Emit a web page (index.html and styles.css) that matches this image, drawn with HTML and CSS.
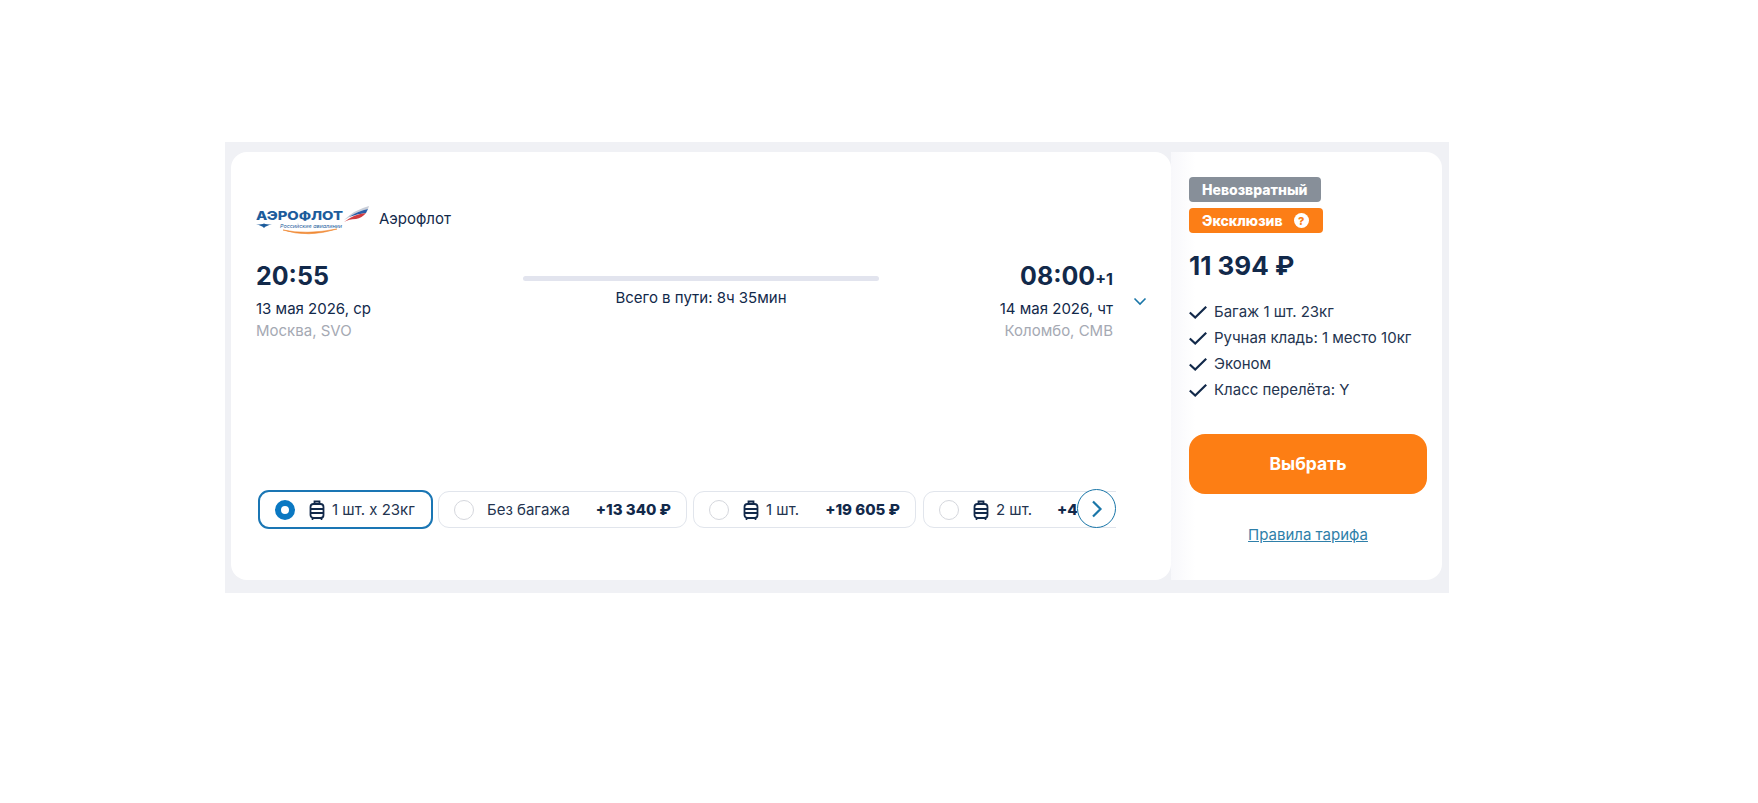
FILE: index.html
```html
<!DOCTYPE html>
<html lang="ru">
<head>
  <meta charset="UTF-8">
  <title>Авиабилеты</title>
  <link rel="stylesheet" href="styles.css">
</head>
<body>

  <div class="ticket">
    <div class="flight">
      <div class="airline">
        <svg class="logo" width="114" height="32" viewBox="0 0 114 32">
          <text x="0" y="15" class="logo-name" textLength="87" lengthAdjust="spacingAndGlyphs">АЭРОФЛОТ</text>
          <text x="24" y="23" class="logo-sub" textLength="62" lengthAdjust="spacingAndGlyphs">Российские авиалинии</text>
          <path d="M0 19.5 Q6 19.5 8 18.5 Q10 19.5 16 19.5 Q10 20.5 8 23 Q6 20.5 0 19.5Z" fill="#1d5c9c"/>
          <path d="M27 25 Q50 30 81 24 Q52 33 27 25Z" fill="#f08a35" stroke="#f08a35" stroke-width=".6"/>
          <path d="M88 15 Q98 5 113 1 L112 4 Q102 6 97 10 Q92 13 88 15Z" fill="#c9ced8"/>
          <path d="M93 12 Q102 6 112 4 L110 8 Q101 9 93 12Z" fill="#2a5ea8"/>
          <path d="M88 17 Q98 9 110 8 Q106 13 100 14 Q93 14 88 17Z" fill="#cf3a3f"/>
        </svg>
        <span class="airline-name">Аэрофлот</span>
      </div>

      <div class="route">
        <div class="point">
          <div class="time">20:55</div>
          <div class="date">13 мая 2026, ср</div>
          <div class="city">Москва, SVO</div>
        </div>
        <div class="duration">
          <div class="duration-bar"></div>
          <div class="duration-text">Всего в пути: 8ч 35мин</div>
        </div>
        <div class="point point-end">
          <div class="time">08:00<span class="plus-day">+1</span></div>
          <div class="date">14 мая 2026, чт</div>
          <div class="city">Коломбо, CMB</div>
        </div>
        <svg class="chevron" width="14" height="9" viewBox="0 0 14 9">
          <path d="M1.5 1.5 7 7 12.5 1.5" fill="none" stroke="#1a76a8" stroke-width="1.6"/>
        </svg>
      </div>

      <div class="options-wrap">
        <div class="options">
          <div class="option option-active">
            <span class="radio radio-on"></span>
            <svg class="bag" width="16" height="20" viewBox="0 0 16 20"><use href="#bag"/></svg>
            <span class="option-name">1 шт. х 23кг</span>
          </div>
          <div class="option option-nobag">
            <span class="radio"></span>
            <span class="option-name">Без багажа</span>
            <span class="option-price">+13 340 ₽</span>
          </div>
          <div class="option option-one">
            <span class="radio"></span>
            <svg class="bag" width="16" height="20" viewBox="0 0 16 20"><use href="#bag"/></svg>
            <span class="option-name">1 шт.</span>
            <span class="option-price">+19 605 ₽</span>
          </div>
          <div class="option option-two">
            <span class="radio"></span>
            <svg class="bag" width="16" height="20" viewBox="0 0 16 20"><use href="#bag"/></svg>
            <span class="option-name">2 шт.</span>
            <span class="option-price">+4</span>
          </div>
        </div>
        <button class="next">
          <svg width="12" height="18" viewBox="0 0 12 18"><path d="M2 1.5 9.5 9 2 16.5" fill="none" stroke="#1a76a8" stroke-width="2.2"/></svg>
        </button>
      </div>
    </div>

    <div class="fare">
      <div class="badge badge-gray">Невозвратный</div>
      <div class="badge badge-orange">Эксклюзив <span class="badge-help">?</span></div>
      <div class="price">11 394 ₽</div>
      <ul class="perks">
        <li><svg class="check" width="18" height="14" viewBox="0 0 18 14"><use href="#check"/></svg>Багаж 1 шт. 23кг</li>
        <li><svg class="check" width="18" height="14" viewBox="0 0 18 14"><use href="#check"/></svg>Ручная кладь: 1 место 10кг</li>
        <li><svg class="check" width="18" height="14" viewBox="0 0 18 14"><use href="#check"/></svg>Эконом</li>
        <li><svg class="check" width="18" height="14" viewBox="0 0 18 14"><use href="#check"/></svg>Класс перелёта: Y</li>
      </ul>
      <button class="select">Выбрать</button>
      <a class="rules" href="#">Правила тарифа</a>
    </div>
  </div>

  <svg class="defs" width="0" height="0">
    <defs>
      <g id="bag">
        <rect x="1.5" y="4" width="13" height="14" rx="3" fill="none" stroke="#12294a" stroke-width="1.8"/>
        <path d="M5.5 4V1.5H10.5V4M2 9H14M2 13H14" fill="none" stroke="#12294a" stroke-width="1.8"/>
        <path d="M3.5 18V20M12.5 18V20" stroke="#12294a" stroke-width="1.6"/>
      </g>
      <path id="check" d="M.8 7.5 6.2 12.5 17.2 1.8" fill="none" stroke="#12294a" stroke-width="2.2"/>
    </defs>
  </svg>

</body>
</html>
```

FILE: styles.css
```css
body {
  font-family: 'Inter', 'Liberation Sans', sans-serif;
  background: #fff;
  color: #12294a;
  margin: 0;
  padding: 142px 0 0 225px;
}

.defs {
  display: block;
}

.ticket {
  display: flex;
  width: 1224px;
  height: 451px;
  box-sizing: border-box;
  padding: 10px 7px 13px 6px;
  background: #f0f1f5;
}

.flight {
  width: 940px;
  box-sizing: border-box;
  padding: 53px 0 0 25px;
  background: #fff;
  border-radius: 16px;
}

.airline {
  display: flex;
  align-items: flex-start;
  height: 32px;
}

.logo {
  margin-right: 9px;
}

.logo-name {
  font-size: 12px;
  font-weight: 800;
  fill: #1d5c9c;
}

.logo-sub {
  font-size: 5px;
  font-style: italic;
  fill: #1d5c9c;
}

.airline-name {
  font-size: 15px;
  line-height: 18px;
  margin-top: 5px;
}

.route {
  display: grid;
  grid-template-columns: 267px 356px 234px auto;
  margin-top: 24px;
}

.point-end {
  text-align: right;
}

.time {
  font-size: 25px;
  font-weight: 700;
  line-height: 30px;
}

.plus-day {
  font-size: 16px;
  line-height: 1;
}

.date {
  margin-top: 9px;
  font-size: 15px;
  line-height: 18px;
}

.city {
  margin-top: 4px;
  font-size: 15px;
  line-height: 18px;
  color: #a5a9b3;
}

.duration {
  margin-top: 15px;
  text-align: center;
}

.duration-bar {
  height: 5px;
  background: #e2e4ee;
  border-radius: 3px;
}

.duration-text {
  margin-top: 8px;
  font-size: 15px;
  line-height: 18px;
}

.chevron {
  margin: 36px 0 0 20px;
}

.options-wrap {
  position: relative;
  width: 860px;
  margin-top: 149px;
}

.options {
  display: flex;
  gap: 6px;
  overflow: hidden;
  padding: 2px 0 1px 2px;
}

.option {
  display: flex;
  flex: none;
  align-items: center;
  height: 37px;
  box-sizing: border-box;
  padding: 0 15px;
  font-size: 15px;
  border: 1px solid #e1e5ec;
  border-radius: 11px;
  background: #fff;
}

.option-active {
  width: 175px;
  height: 39px;
  margin-top: -1px;
  border: 2px solid #1a76b4;
}

.option-nobag {
  width: 249px;
  margin-left: -1px;
}

.option-nobag .radio {
  margin-right: 13px;
}

.option-one {
  width: 223px;
}

.option-two {
  width: 224px;
  margin-left: 1px;
}

.radio {
  flex: none;
  width: 20px;
  height: 20px;
  box-sizing: border-box;
  border: 1px solid #d5d7dd;
  border-radius: 50%;
  margin-right: 14px;
}

.radio-on {
  border: 6px solid #0a78c2;
  background: #fff;
}

.bag {
  flex: none;
  margin-right: 7px;
}

.option-name {
  color: #24344f;
}

.option-price {
  margin-left: auto;
  font-weight: 800;
}

.option-two .option-price {
  margin-left: 25px;
}

.next {
  position: absolute;
  top: 0;
  right: 0;
  display: flex;
  align-items: center;
  justify-content: center;
  width: 39px;
  height: 39px;
  padding: 0;
  background: #fff;
  border: 1px solid #1a76a8;
  border-radius: 50%;
}

.fare {
  flex: 1;
  padding: 25px 15px 0 18px;
  background: linear-gradient(90deg, #f8f8fb, #fff 24px);
  border-radius: 0 16px 16px 0;
}

.badge {
  display: flex;
  align-items: center;
  height: 25px;
  box-sizing: border-box;
  padding-left: 13px;
  font-size: 14px;
  font-weight: 800;
  color: #fff;
  border-radius: 4px;
}

.badge-gray {
  width: 132px;
  background: #878f99;
}

.badge-orange {
  width: 134px;
  margin-top: 6px;
  background: #fc7e16;
}

.badge-help {
  display: flex;
  align-items: center;
  justify-content: center;
  width: 15px;
  height: 15px;
  margin-left: 11px;
  font-size: 11px;
  color: #fc7e16;
  background: #fff;
  border-radius: 50%;
}

.price {
  margin-top: 18px;
  font-size: 26px;
  font-weight: 700;
  line-height: 30px;
}

.perks {
  list-style: none;
  margin: 17px 0 0;
  padding: 0;
  font-size: 15px;
  color: #24344f;
}

.perks li {
  display: flex;
  align-items: center;
  height: 26px;
}

.check {
  flex: none;
  margin: 2px 7px 0 0;
}

.select {
  display: block;
  width: 238px;
  height: 60px;
  margin-top: 32px;
  padding-bottom: 2px;
  font-family: inherit;
  font-size: 17.5px;
  font-weight: 700;
  color: #fff;
  background: #fd7e14;
  border: none;
  border-radius: 16px;
}

.rules {
  display: block;
  width: 238px;
  margin-top: 32px;
  font-size: 15px;
  line-height: 18px;
  text-align: center;
  color: #2f7fa9;
}
```
